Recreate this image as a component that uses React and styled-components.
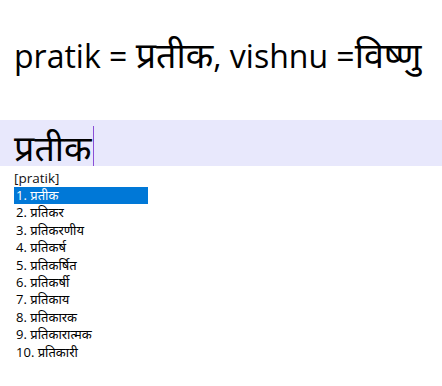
import React from "react";
import styled, { createGlobalStyle } from "styled-components";

const Global = createGlobalStyle`
  html, body { margin: 0; padding: 0; background: #fff; }
  body { font-family: "Open Sans", "Noto Sans", "Noto Sans Devanagari", "Lohit Devanagari", sans-serif; color: #000; }
`;

const Page = styled.div`
  width: 442px;
  height: 386px;
  overflow: hidden;
  display: flex;
  flex-direction: column;
`;

const Headline = styled.div`
  font-size: 32px;
  line-height: 40px;
  height: 40px;
  padding: 36px 0 0 14px;
  white-space: nowrap;
`;

const Deva = styled.span`
  font-size: 1.12em;
  line-height: 1;
`;

const InputBand = styled.div`
  margin-top: 44px;
  height: 46px;
  background: #e8e8fc;
  display: flex;
  align-items: flex-end;
  padding-left: 14px;
`;

const InputText = styled.span`
  font-size: 32px;
  line-height: 40px;
  height: 40px;
  display: flex;
  align-items: flex-end;
`;

const Caret = styled.span`
  display: inline-block;
  width: 1px;
  height: 40px;
  background: #8a4fd8;
  margin-left: 1px;
`;

const Suggest = styled.div`
  padding: 4px 0 0 14px;
  font-size: 13px;
`;

const Reading = styled.div`
  line-height: 16px;
  height: 17px;
  font-size: 13.5px;
  color: #111;
`;

const List = styled.ol`
  list-style: none;
  margin: 0;
  padding: 0;
`;

const Item = styled.li`
  width: 132px;
  height: 17.4px;
  line-height: 17.4px;
  padding-left: 2px;
  font-size: 13px;
  background: ${(p) => (p.$active ? "#0078d7" : "transparent")};
  color: ${(p) => (p.$active ? "#fff" : "#000")};
  white-space: nowrap;
`;

const words = [
  "प्रतीक",
  "प्रतिकर",
  "प्रतिकरणीय",
  "प्रतिकर्ष",
  "प्रतिकर्षित",
  "प्रतिकर्षी",
  "प्रतिकाय",
  "प्रतिकारक",
  "प्रतिकारात्मक",
  "प्रतिकारी",
];

export default function App() {
  return (
    <Page>
      <Global />
      <Headline>
        pratik = <Deva>प्रतीक</Deva>, vishnu =<Deva>विष्णु</Deva>
      </Headline>
      <InputBand>
        <InputText>
          <Deva>प्रतीक</Deva>
          <Caret />
        </InputText>
      </InputBand>
      <Suggest>
        <Reading>[pratik]</Reading>
        <List>
          {words.map((w, i) => (
            <Item key={w} $active={i === 0}>
              {i + 1}. {w}
            </Item>
          ))}
        </List>
      </Suggest>
    </Page>
  );
}
